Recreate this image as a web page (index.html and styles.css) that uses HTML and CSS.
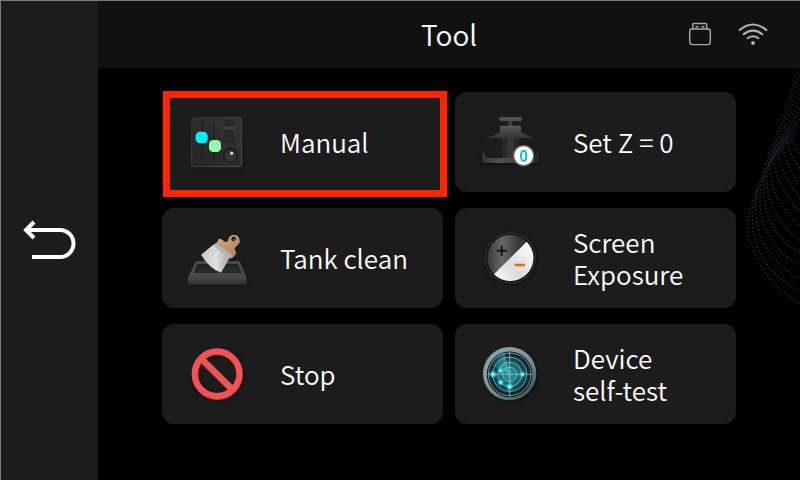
FILE: index.html
```
<!DOCTYPE html>
<html lang="en">
<head>
<meta charset="utf-8">
<title>Tool</title>
<link rel="stylesheet" href="styles.css">
</head>
<body>
<div class="screen">
  <nav class="sidebar">
    <button class="back" type="button" aria-label="Back">
      <svg width="54" height="42" viewBox="1 1 54 42" fill="none" stroke="#fff" stroke-width="4">
        <path d="M3 11H38a13 13 0 0 1 0 27H10"/>
        <path d="M12 3L4 11l8 8"/>
      </svg>
    </button>
  </nav>
  <div class="content">
    <header class="topbar">
      <h1 class="title">Tool</h1>
      <div class="status">
        <svg width="24" height="24" viewBox="0 0 24 24" fill="none" stroke="#a8a8a8" stroke-width="1.400">
          <rect x="1.700" y="7" width="20.600" height="15.600" rx="2.500"/>
          <path d="M4.800 7V2.500q0-1 1-1H17.700q1 0 1 1V7"/>
          <path d="M7.500 4.700h3M13.500 4.700h3"/>
        </svg>
        <svg width="30" height="24" viewBox="0 0 30 24" fill="none" stroke="#b4b4b4" stroke-width="2">
          <path d="M1 8.500Q15-3.500 29 8.500"/>
          <path d="M5 12.700q10-8.200 20 0"/>
          <path d="M9 16.700q6-4.800 12 0"/>
          <circle cx="15" cy="21" r="1.900" fill="#b4b4b4" stroke="none"/>
        </svg>
      </div>
    </header>
    <main class="main">
      <svg class="wave" width="54" height="260" viewBox="48 24 162 780" fill="none" stroke="#4a4a4c" stroke-width="5" stroke-linecap="round" stroke-dasharray="0 12">
        <defs>
          <radialGradient id="haze"><stop stop-color="#121824" stop-opacity=".75"/><stop offset="1" stop-color="#0a0e18" stop-opacity="0"/></radialGradient>
        </defs>
        <ellipse cx="165" cy="245" rx="115" ry="30" fill="url(#haze)" stroke="none" transform="rotate(-52 165 245)"/>
        <g stroke="#2a2a2c">
          <path d="M204 30Q180 110 76 400"/>
          <path d="M208 48Q186 120 86 385"/>
          <path d="M210 78Q180 160 96 365"/>
          <path d="M212 108Q180 190 104 345"/>
          <path d="M212 138Q180 205 112 325"/>
          <path d="M212 170Q180 220 124 300"/>
        </g>
        <g stroke="#2e2e30">
          <path d="M76 400C48 470 48 520 68 565C95 640 145 690 210 734"/>
          <path d="M86 385C60 450 62 515 84 565C110 625 155 668 210 694"/>
          <path d="M84 390C70 450 78 505 102 550C132 606 170 635 210 656"/>
          <path d="M96 365C82 430 92 485 120 530C148 578 178 600 210 616"/>
          <path d="M104 350C94 415 108 470 138 512C160 546 185 566 210 577"/>
          <path d="M110 335C108 400 122 440 150 478C170 510 188 526 210 540"/>
          <path d="M120 315C120 370 136 410 160 440C176 466 192 484 210 498"/>
          <path d="M132 300C136 350 152 380 174 410C188 430 198 444 210 456"/>
          <path d="M146 285C150 330 170 360 210 414"/>
          <path d="M160 265C165 305 183 335 210 372"/>
          <path d="M172 248C178 280 192 302 210 326"/>
          <path d="M186 234Q194 262 210 280"/>
        </g>
      </svg>
      <div class="grid">
        <button class="tile" type="button">
          <svg class="icon" viewBox="0 -3 228 228">
            <defs>
              <linearGradient id="panel" x1="0" y1="1" x2="1" y2="0"><stop stop-color="#252525"/><stop offset="1" stop-color="#343434"/></linearGradient>
              <linearGradient id="rim" x1="0" y1="0" x2="1" y2="1"><stop stop-color="#303030"/><stop offset="1" stop-color="#555"/></linearGradient>
            </defs>
            <rect class="shadow" x="38" y="39" width="150" height="150" rx="10" fill="#101010"/>
            <rect x="35" y="37" width="150" height="148" rx="9" fill="url(#panel)" stroke="url(#rim)" stroke-width="3"/>
            <path d="M68 49v96M103 58v113" stroke="#181818" stroke-width="4" stroke-linecap="round"/>
            <path d="M71 50v94M106 59v112" stroke="#353535" stroke-width="2"/>
            <path d="M138 48h23v9h-23zM137 75h22v34h-22z" fill="#2a2a2a" stroke="#202020" stroke-width="2"/>
            <path d="M134 60h31v13h-31z" fill="#444"/><path d="M134 60h31v4h-31z" fill="#222"/>
            <rect x="47" y="80" width="36" height="35" rx="13" fill="#00f0ff"/>
            <rect x="87" y="105" width="36" height="36" rx="13" fill="#8efaaa"/>
            <circle cx="151" cy="151" r="20" fill="#343434" stroke="#171717" stroke-width="5"/>
            <path d="M133 158a20 20 0 0 0 36 0" fill="none" stroke="#4a4a4a" stroke-width="2"/>
            <circle cx="155" cy="145" r="5" fill="#d8d8d8"/>
          </svg>
          <span class="label">Manual</span>
          <span class="highlight"></span>
        </button>
        <button class="tile" type="button">
          <svg class="icon" viewBox="3 -3 228 228">
            <defs>
              <linearGradient id="plate" x1="0" y1="0" x2="0" y2="1"><stop stop-color="#595959"/><stop offset="1" stop-color="#343434"/></linearGradient>
              <linearGradient id="base" x1="0" x2="1"><stop stop-color="#303030"/><stop offset=".3" stop-color="#515151"/><stop offset="1" stop-color="#252525"/></linearGradient>
            </defs>
            <path class="shadow" d="M32 145v30h165v-30" fill="none" stroke="#0c0c0c" stroke-width="7"/>
            <rect x="90" y="98" width="51" height="64" fill="#292929"/>
            <rect x="107" y="98" width="18" height="64" fill="#393939"/>
            <path d="M30 139q6 0 11 10v10h149v-10q2-9 11-10v29q0 6-6 6H36q-6 0-6-6z" fill="url(#base)"/>
            <rect x="109" y="45" width="12" height="20" fill="#404040"/>
            <rect x="81" y="36" width="69" height="12" rx="5" fill="#505050"/>
            <path d="M84 62h63v20q15 10 41 17H42q28-7 42-17z" fill="url(#plate)"/>
            <path d="M115 104v5M115 117v5M115 130v5M115 143v5" stroke="#202020" stroke-width="4"/>
            <circle cx="155" cy="152" r="32" fill="#6d6d6d"/>
            <circle cx="155" cy="152" r="28" fill="#fff"/>
            <ellipse cx="155" cy="152" rx="8" ry="15" fill="none" stroke="#18bec8" stroke-width="6"/>
          </svg>
          <span class="label">Set Z = 0</span>
        </button>
        <button class="tile" type="button">
          <svg class="icon" viewBox="0 -6 228 228">
            <defs>
              <linearGradient id="front" x1="0" x2="0" y2="1"><stop stop-color="#484848"/><stop offset="1" stop-color="#303030"/></linearGradient>
              <linearGradient id="bristle" x1="0" x2="1"><stop stop-color="#c6c6c6"/><stop offset=".55" stop-color="#e0e0e0"/><stop offset="1" stop-color="#aaa"/></linearGradient>
              <linearGradient id="wood" x1="0" x2="1" y2="1"><stop stop-color="#d9a77f"/><stop offset="1" stop-color="#b57f58"/></linearGradient>
            </defs>
            <path class="shadow" d="M26 168h174v21H26z" fill="#0d0d0d"/>
            <path d="M48 117H179l20 49v19q0 2-2 2H26q-2 0-2-2v-19z" fill="#494949"/>
            <path d="M52 126H173l12 27H42z" fill="#232323"/>
            <path d="M57 135H170l7 16H47z" fill="#2b2b2b"/>
            <path d="M24 166h175v18q0 3-3 3H27q-3 0-3-3z" fill="url(#front)"/>
            <path d="M103 66L63 98Q87 138 123 152L148 109Z" fill="url(#bristle)"/>
            <path d="M103 80L82 95M112 80L96 100M126 93L111 109M138 106L120 134" stroke="#b4b4b4" stroke-width="2"/>
            <path d="M117 51q3-2 6 0l12 8q5 3 8-3l5-11q13-12 26-2 10 12 2 23l-10 10q-4 5 0 10l3 6q-4 11-15 18L107 67z" fill="url(#wood)"/>
            <path d="M108 62l48 39-8 10-48-40z" fill="#abb7c4"/>
            <circle cx="161" cy="51" r="6" fill="#202020" stroke="#080808" stroke-width="2"/>
            <path d="M161 53l5 2" stroke="#ccc" stroke-width="3"/>
          </svg>
          <span class="label">Tank clean</span>
        </button>
        <button class="tile" type="button">
          <svg class="icon" viewBox="3 -6 228 228">
            <defs>
              <linearGradient id="dark" x1="0" x2=".7"><stop stop-color="#373737"/><stop offset=".45" stop-color="#686868"/><stop offset="1" stop-color="#373737"/></linearGradient>
              <linearGradient id="light" x1="0" y1="1" x2="1" y2="0"><stop stop-color="#fff"/><stop offset=".4" stop-color="#dcdcdc"/><stop offset="1" stop-color="#fff"/></linearGradient>
            </defs>
            <circle class="shadow" cx="117" cy="110" r="78" fill="#0c0c0c"/>
            <circle cx="115" cy="108" r="77" fill="#303030"/>
            <circle cx="115" cy="108" r="73" fill="#111"/>
            <circle cx="115" cy="108" r="69" fill="url(#dark)"/>
            <path d="M164 59A69 69 0 0 1 66 157Z" fill="url(#light)"/>
            <path d="M89 71v31M74 86h31" stroke="#161616" stroke-width="6"/>
            <path d="M128 129h31" stroke="#dc7416" stroke-width="8"/>
          </svg>
          <span class="label">Screen<br>Exposure</span>
        </button>
        <button class="tile" type="button">
          <svg class="icon" viewBox="0 -3 228 228">
            <g class="shadow" fill="none" stroke="#0c0c0c" stroke-width="20"><circle cx="115" cy="114" r="67"/></g>
            <g fill="none" stroke="#ba3d40" stroke-width="20"><circle cx="112" cy="112" r="67"/><path d="M64 66l92 92"/></g>
            <g fill="none" stroke="#f05356" stroke-width="18"><circle cx="111" cy="110" r="67"/><path d="M63 64l94 92"/></g>
          </svg>
          <span class="label">Stop</span>
        </button>
        <button class="tile" type="button">
          <svg class="icon" viewBox="3 -3 228 228">
            <defs>
              <radialGradient id="radar"><stop stop-color="#299ba4"/><stop offset=".45" stop-color="#176a75"/><stop offset="1" stop-color="#051417"/></radialGradient>
              <linearGradient id="bezel" x1="0" y1="0" x2=".8" y2="1"><stop stop-color="#91a9ad"/><stop offset=".6" stop-color="#789094"/><stop offset="1" stop-color="#3e5258"/></linearGradient>
              <linearGradient id="sweep" x1="0" x2="1"><stop stop-color="#3fc5cf" stop-opacity="0"/><stop offset="1" stop-color="#3fc5cf" stop-opacity=".7"/></linearGradient>
              <radialGradient id="blip"><stop stop-color="#d8ffff"/><stop offset=".35" stop-color="#57e6f0"/><stop offset="1" stop-color="#20b8c8" stop-opacity="0"/></radialGradient>
            </defs>
            <circle class="shadow" cx="118" cy="114" r="79" fill="#0b0b0b"/>
            <circle cx="113" cy="110" r="80" fill="url(#bezel)"/>
            <circle cx="113" cy="112" r="67" fill="url(#radar)" stroke="#071115" stroke-width="3"/>
            <path d="M113 112L53 82A67 67 0 0 1 98 47z" fill="url(#sweep)"/>
            <g fill="none" stroke="#a9cacb" stroke-width="2.500" stroke-opacity=".85">
              <circle cx="113" cy="112" r="21"/><circle cx="113" cy="112" r="36"/><circle cx="113" cy="112" r="51"/><circle cx="113" cy="112" r="64"/>
              <path d="M46 112h134M113 45v134"/>
            </g>
            <g fill="url(#blip)"><circle cx="63" cy="112" r="13"/><circle cx="86" cy="101" r="10"/><circle cx="86" cy="136" r="11"/><circle cx="113" cy="149" r="13"/><circle cx="151" cy="112" r="11"/></g>
          </svg>
          <span class="label">Device<br>self-test</span>
        </button>
      </div>
    </main>
  </div>
</div>
</body>
</html>
```
FILE: styles.css
```
* {
  box-sizing: border-box;
}

body {
  margin: 0;
  background: #000;
  color: #fff;
  font-family: "Noto Sans CJK SC", "Noto Sans", sans-serif;
}

button {
  border: 0;
  padding: 0;
  color: inherit;
  font: inherit;
}

svg {
  display: block;
  flex: none;
}

.screen {
  display: flex;
  min-height: 100vh;
  border-top: 1px solid #7c7c7c;
  border-left: 1px solid #7c7c7c;
}

.sidebar {
  flex: none;
  width: 97px;
  display: flex;
  align-items: center;
  justify-content: center;
  background: #1c1c1c;
}

.back {
  background: none;
}

.content {
  flex: 1;
  display: flex;
  flex-direction: column;
}

.topbar {
  display: grid;
  grid-template-columns: 1fr auto 1fr;
  align-items: center;
  height: 67px;
  padding: 0 32px 2px;
  background: #111;
}

.title {
  grid-column: 2;
  margin: 0;
  font-size: 28px;
  line-height: 40px;
  font-weight: 350;
}

.status {
  display: flex;
  justify-content: flex-end;
  gap: 26px;
}

.main {
  position: relative;
  flex: 1;
  padding: 24px 64px;
}

.wave {
  position: absolute;
  top: 0;
  right: 0;
}

.grid {
  position: relative;
  display: grid;
  grid-template-columns: 1fr 1fr;
  gap: 16px 12px;
}

.tile {
  position: relative;
  display: flex;
  align-items: center;
  gap: 24px;
  min-height: 100px;
  padding: 0 18px;
  border-radius: 12px;
  background: #1c1c1c;
  text-align: left;
}

.icon {
  width: 76px;
  height: 76px;
}

.shadow {
  filter: blur(4px);
}

.label {
  font-size: 26px;
  line-height: 32px;
  font-weight: 350;
  white-space: nowrap;
}

.highlight {
  position: absolute;
  inset: -1px -4px -5px 1px;
  border: 7px solid #ff2600;
}
```
